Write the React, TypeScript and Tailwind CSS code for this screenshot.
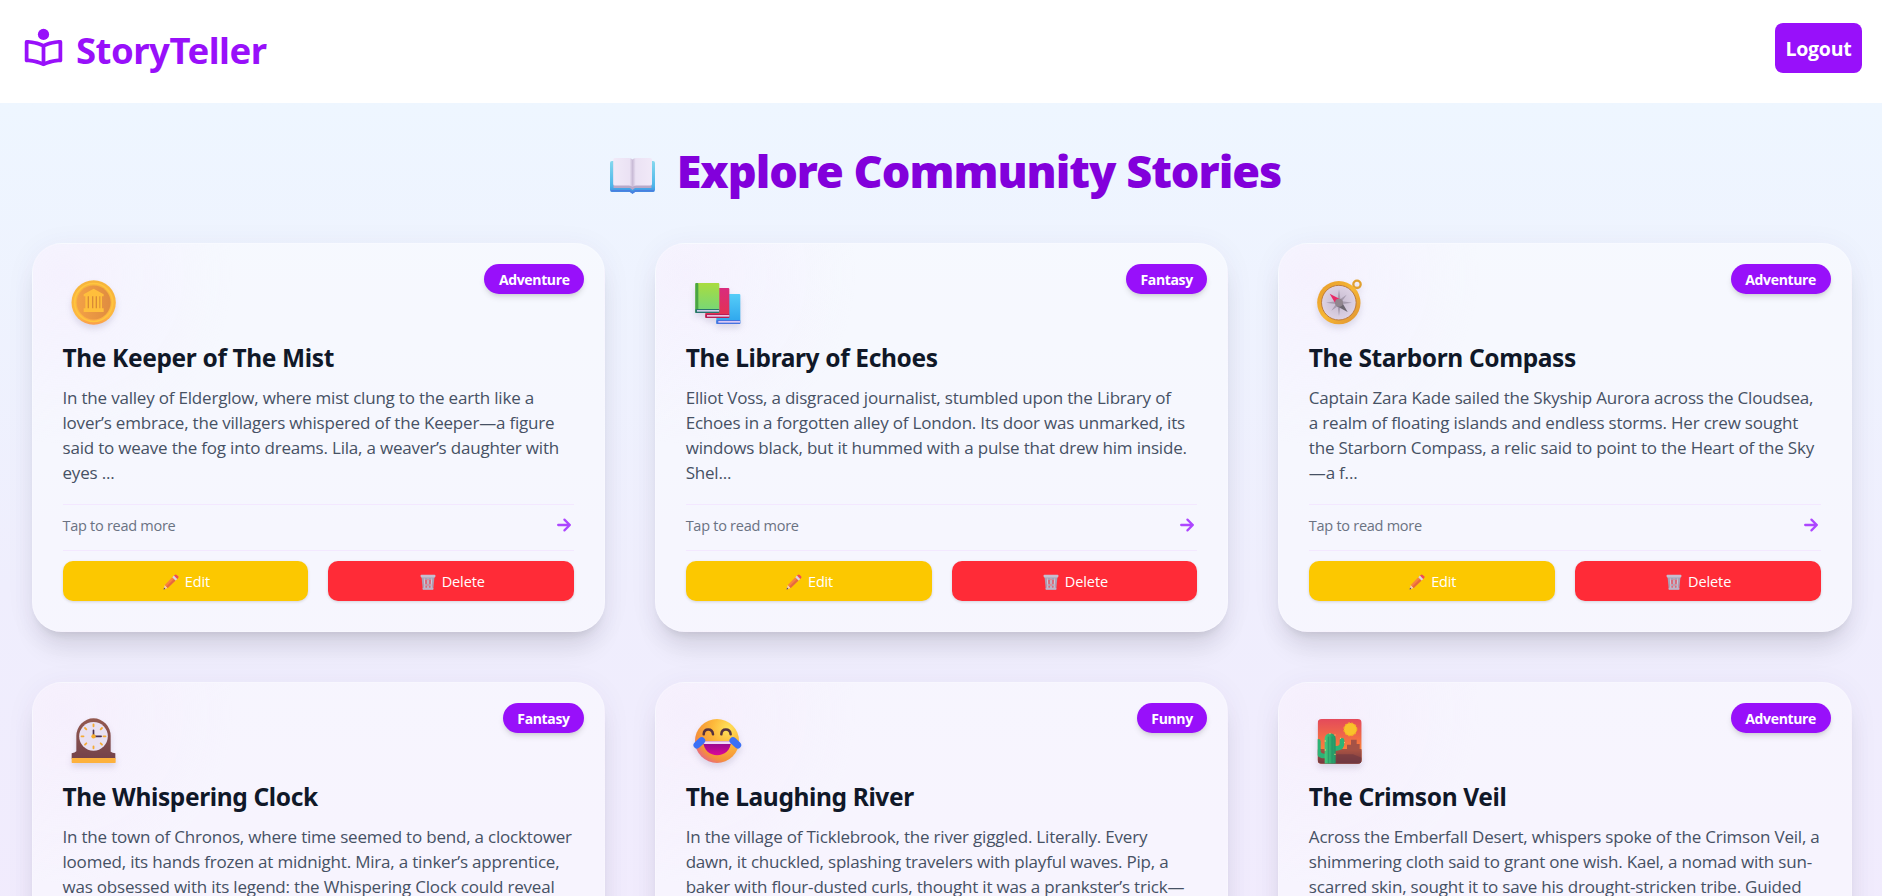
import type { ReactNode } from "react";

const SANS = "font-['Open_Sans','Noto_Sans',sans-serif]";
const BOLD_SANS = "font-['Noto_Sans','Open_Sans',sans-serif]";

function BookReaderIcon() {
  return (
    <svg viewBox="0 0 24 24" className="size-[45px] shrink-0" fill="currentColor">
      <path d="M21 8c-.202 0-4.85.029-9 2.008C7.85 8.029 3.202 8 3 8a1 1 0 0 0-1 1v9.883a1 1 0 0 0 .305.719c.195.188.48.305.729.28l.127-.001c.683 0 4.296.098 8.416 2.025.016.008.034.005.05.011.119.049.244.083.373.083s.254-.034.374-.083c.016-.006.034-.003.05-.011 4.12-1.928 7.733-2.025 8.416-2.025l.127.001c.238.025.533-.092.729-.28.194-.189.304-.449.304-.719V9a1 1 0 0 0-1-1zM4 10.049c1.485.111 4.381.48 7 1.692v7.742c-3-1.175-5.59-1.494-7-1.576v-7.858zm16 7.858c-1.41.082-4 .401-7 1.576v-7.742c2.619-1.212 5.515-1.581 7-1.692v7.858z" />
      <circle cx="12" cy="5" r="3" />
    </svg>
  );
}

function OpenBook() {
  return (
    <svg viewBox="0 0 45 36" className="mt-[6px] h-9 w-[45px] shrink-0">
      <defs>
        <linearGradient id="cover" x1="0" y1="0" x2="0" y2="1">
          <stop offset="0" stopColor="#85d8ee" />
          <stop offset=".75" stopColor="#4cb6ea" />
          <stop offset="1" stopColor="#3f83e0" />
        </linearGradient>
        <linearGradient id="page" x1="0" y1="0" x2="1" y2="0">
          <stop offset="0" stopColor="#f1eaf8" />
          <stop offset=".42" stopColor="#ebe2f4" />
          <stop offset=".5" stopColor="#c9bbd6" />
          <stop offset=".58" stopColor="#ebe2f4" />
          <stop offset="1" stopColor="#f1e9f8" />
        </linearGradient>
      </defs>
      <path d="M2 3h41a2 2 0 0 1 2 2v27a2 2 0 0 1-2 2H25l-2.500 2L20 34H2a2 2 0 0 1-2-2V5a2 2 0 0 1 2-2z" fill="url(#cover)" />
      <path d="M1 32h19l2.500 2L25 32h19v1.500H26L22.500 35.500 19 33.500H1z" fill="#4a7fe0" />
      <path d="M3.500 3.500h38V30H25l-2.500 2L20 30H3.500z" fill="#b8a8c8" />
      <path d="M5 0h14q2.500 0 3.500 1.500Q23.500 0 26 0h14q2 0 2 2v24q0 1.500-2 1.500H26q-2.500 0-3.500 1.500-1-1.500-3.500-1.500H5q-1.800 0-1.800-1.500V2Q3.200 0 5 0z" fill="url(#page)" />
    </svg>
  );
}

function Emoji({ viewBox, children }: { viewBox: string; children: ReactNode }) {
  return (
    <svg
      viewBox={viewBox}
      className="mt-[6px] ml-[8.5px] size-[45px] overflow-visible drop-shadow-[0_4px_3px_rgba(60,40,90,0.14)]"
    >
      {children}
    </svg>
  );
}

function Coin() {
  return (
    <Emoji viewBox="31 45 135 135">
      <defs>
        <linearGradient id="coinRim" x1="0" y1="0" x2="0" y2="1">
          <stop offset="0" stopColor="#f6b53c" />
          <stop offset=".8" stopColor="#fdb740" />
          <stop offset="1" stopColor="#fb9d4c" />
        </linearGradient>
        <linearGradient id="coinFace" x1="0" y1="0" x2="1" y2="0">
          <stop offset="0" stopColor="#f3a146" />
          <stop offset="1" stopColor="#df8c40" />
        </linearGradient>
      </defs>
      <circle cx="99" cy="112.500" r="66.500" fill="url(#coinRim)" />
      <circle cx="99" cy="112.500" r="57" fill="none" stroke="#ffc53f" strokeWidth="5" />
      <circle cx="99" cy="112.500" r="51" fill="url(#coinFace)" />
      <path d="M99 71l30 17v6h-5v36h5v11H69v-11h5V94h-5v-6z" fill="#ffbf3c" />
      <path d="M81 94h4v36h-4zM94 94h4v36h-4zM105 94h4v36h-4zM116 94h3v36h-3z" fill="#d98a36" />
    </Emoji>
  );
}

function Books() {
  return (
    <Emoji viewBox="41 60 135 135">
      <defs>
        <linearGradient id="bkG" x1="0" y1="0" x2="0" y2="1">
          <stop offset="0" stopColor="#a9dc3f" />
          <stop offset="1" stopColor="#72d77c" />
        </linearGradient>
        <linearGradient id="bkR" x1="0" y1="0" x2="0" y2="1">
          <stop offset="0" stopColor="#d92c7e" />
          <stop offset="1" stopColor="#e5324d" />
        </linearGradient>
        <linearGradient id="bkB" x1="0" y1="0" x2="0" y2="1">
          <stop offset="0" stopColor="#56cdf8" />
          <stop offset="1" stopColor="#2ba3ec" />
        </linearGradient>
      </defs>
      <rect x="108" y="102" width="72" height="90" rx="3" fill="url(#bkB)" />
      <rect x="108" y="180" width="72" height="12" rx="3" fill="#4774e0" />
      <rect x="114" y="183" width="66" height="5" fill="#dcc9f5" />
      <rect x="75" y="84" width="72" height="90" rx="3" fill="url(#bkR)" />
      <rect x="75" y="162" width="72" height="12" rx="3" fill="#b81f55" />
      <rect x="80" y="165" width="67" height="5" fill="#e8c4e4" />
      <rect x="45" y="69" width="72" height="90" rx="3" fill="url(#bkG)" />
      <rect x="45" y="69" width="9" height="90" rx="3" fill="#4aa443" />
      <rect x="45" y="147" width="72" height="12" rx="3" fill="#28766f" />
      <rect x="50" y="150" width="66" height="5" fill="#cfcfe9" />
    </Emoji>
  );
}

function Compass() {
  return (
    <Emoji viewBox="52 60 135 135">
      <defs>
        <linearGradient id="cmpRim" x1="0" y1="0" x2="1" y2="1">
          <stop offset="0" stopColor="#e59a2c" />
          <stop offset=".5" stopColor="#f7b733" />
          <stop offset="1" stopColor="#dd8f32" />
        </linearGradient>
        <radialGradient id="cmpFace">
          <stop offset="0" stopColor="#c6bacf" />
          <stop offset="1" stopColor="#ddd2e4" />
        </radialGradient>
      </defs>
      <circle cx="172" cy="73" r="11" fill="none" stroke="#e0a02f" strokeWidth="7" />
      <circle cx="117.500" cy="128" r="65" fill="url(#cmpRim)" />
      <circle cx="117.500" cy="128" r="52" fill="url(#cmpFace)" stroke="#bd7a3d" strokeWidth="3" />
      <path d="M118 88l5 35 34 5-34 5-5 35-5-35-34-5 34-5zM141 104l-14 20-6-6zM95 152l14-20 6 6z" fill="#a79caf" />
      <path d="M90 101l32 17-14 14z" fill="#e92866" />
      <path d="M144 156l-32-17 14-14z" fill="#6c6670" />
      <circle cx="118" cy="128" r="12" fill="#91868f" />
    </Emoji>
  );
}

function Clock() {
  return (
    <Emoji viewBox="31 57 135 135">
      <defs>
        <linearGradient id="clkWood" x1="0" y1="0" x2="0" y2="1">
          <stop offset="0" stopColor="#93594f" />
          <stop offset="1" stopColor="#74424a" />
        </linearGradient>
      </defs>
      <path d="M47 108a51.500 53 0 0 1 103 0v47q5 3 14 5v16H33v-16q10-2 14-6z" fill="url(#clkWood)" />
      <rect x="33" y="174" width="132" height="15" rx="2" fill="#fdb13c" />
      <circle cx="98.500" cy="109" r="43" fill="#e9e1f2" />
      <g stroke="#f5ab35" strokeWidth="5.500" strokeLinecap="round">
        <path d="M98.500 73v6M98.500 139v6M62.500 109h6M128.500 109h6M73 84l4 4M120 130l4 4M73 134l4-4M120 88l4-4" />
      </g>
      <path d="M98.500 109V91M98.500 109h23" stroke="#49304e" strokeWidth="5" strokeLinecap="round" />
      <circle cx="98.500" cy="109" r="6.500" fill="#f8ad2d" />
    </Emoji>
  );
}

function Laugh() {
  return (
    <Emoji viewBox="41 57 135 135">
      <defs>
        <radialGradient id="lghFace" cx=".75" cy=".22" r=".9">
          <stop offset="0" stopColor="#ffe45c" />
          <stop offset=".4" stopColor="#fdb83a" />
          <stop offset=".8" stopColor="#f49239" />
          <stop offset="1" stopColor="#e8638a" />
        </radialGradient>
        <linearGradient id="lghMouth" x1="0" y1="0" x2="0" y2="1">
          <stop offset="0" stopColor="#8b0a8e" />
          <stop offset="1" stopColor="#dd0797" />
        </linearGradient>
      </defs>
      <circle cx="110" cy="123" r="66" fill="url(#lghFace)" />
      <path d="M70 103c1-19 26-19 28 0M123 103c1-19 26-19 28 0" fill="none" stroke="#55323f" strokeWidth="7.500" strokeLinecap="round" />
      <path d="M69 124h83c0 56-83 56-83 0z" fill="url(#lghMouth)" />
      <path d="M69 124h83v5q0 3-3 3H73q-4 0-4-3z" fill="#efd9f8" />
      <path d="M50 135l14-13M172 135l-14-13" stroke="#3c70f5" strokeWidth="21" strokeLinecap="round" />
    </Emoji>
  );
}

function Desert() {
  return (
    <Emoji viewBox="52 57 135 135">
      <defs>
        <linearGradient id="dstSky" x1="0" y1="0" x2="0" y2="1">
          <stop offset="0" stopColor="#e44a5b" />
          <stop offset=".7" stopColor="#fb8238" />
        </linearGradient>
        <linearGradient id="dstSand" x1="0" y1="0" x2="0" y2="1">
          <stop offset="0" stopColor="#a75142" />
          <stop offset="1" stopColor="#743a42" />
        </linearGradient>
        <linearGradient id="dstCactus" x1="0" y1="0" x2="1" y2="0">
          <stop offset="0" stopColor="#45c97b" />
          <stop offset="1" stopColor="#219466" />
        </linearGradient>
        <clipPath id="dstClip">
          <rect x="54" y="57" width="132" height="134" rx="12" />
        </clipPath>
      </defs>
      <g clipPath="url(#dstClip)">
        <rect x="54" y="57" width="132" height="134" fill="url(#dstSky)" />
        <path d="M54 147h88v-13h12v-15h17v13h9v15h6v44H54z" fill="#a55246" />
        <path d="M54 151h132v40H54z" fill="url(#dstSand)" />
        <path d="M110 163h50l26 10v18h-76z" fill="#6c3741" opacity=".6" />
        <circle cx="152" cy="88" r="19" fill="#f9c22a" stroke="#f5ae26" strokeWidth="4" strokeDasharray="6 4" />
        <path d="M127 121v9q0 15-16 15h-8M56 124v28q0 16 20 16h10" fill="none" stroke="#2db376" strokeWidth="14" strokeLinecap="round" />
        <path d="M75 191v-75a16 16 0 0 1 33 0v75z" fill="url(#dstCactus)" />
        <path d="M86 110v80M97 110v80" stroke="#218d63" strokeWidth="2" />
        <path d="M75 123h4M104 105h4M75 150h4M104 163h4M91 99v4M121 115h3M133 128h3" stroke="#f6d070" strokeWidth="3" />
      </g>
    </Emoji>
  );
}

function Pencil() {
  return (
    <svg viewBox="0 0 16 16" className="size-4 shrink-0">
      <path d="M.5 15.500l1.300-4.600 2.900 3.100z" fill="#f5cdb4" />
      <path d="M.5 15.500l.6-1.900 1.300 1.300z" fill="#4b3854" />
      <path d="M1.800 10.900L9.300 3.300l3.200 3.300-7.800 7.400z" fill="#f9823f" />
      <path d="M3.300 12.500l7.600-7.600 1.600 1.700-7.800 7.400z" fill="#e6693e" />
      <path d="M9.300 3.300l1.700-1.700 3.300 3.300-1.800 1.700z" fill="#d9d2e6" />
      <path d="M11 1.600l.7-.7q1-.9 2 0l1.400 1.400q.9.900 0 1.800l-.8.800z" fill="#ee4a57" />
    </svg>
  );
}

function Trash() {
  return (
    <svg viewBox="0 0 16 16" className="size-4 shrink-0">
      <path d="M1.500 2.500h13l-1.300 13H2.800z" fill="#a9a0b5" />
      <path d="M4 5l2.700 3L4 11l2.700 3M8 5L5.300 8 8 11l-2.700 3M8 5l2.700 3L8 11l2.700 3M12 5L9.300 8l2.700 3-2.700 3" fill="none" stroke="#e85a6a" strokeWidth=".9" />
      <path d="M4.300 4.500l.6 9.500M8 4.500V14M11.700 4.500l-.6 9.500" stroke="#dad4e2" strokeWidth=".8" />
      <rect x=".6" y=".8" width="14.800" height="2.600" rx=".8" fill="#c6bfd0" />
      <rect x="2.600" y="13.800" width="10.800" height="1.900" rx=".6" fill="#bdb4c8" />
    </svg>
  );
}

type Story = { title: string; genre: string; icon: ReactNode; lines: string[] };

const stories: Story[] = [
  {
    title: "The Keeper of The Mist",
    genre: "Adventure",
    icon: <Coin />,
    lines: [
      "In the valley of Elderglow, where mist clung to the earth like a",
      "lover’s embrace, the villagers whispered of the Keeper—a figure",
      "said to weave the fog into dreams. Lila, a weaver’s daughter with",
      "eyes ...",
    ],
  },
  {
    title: "The Library of Echoes",
    genre: "Fantasy",
    icon: <Books />,
    lines: [
      "Elliot Voss, a disgraced journalist, stumbled upon the Library of",
      "Echoes in a forgotten alley of London. Its door was unmarked, its",
      "windows black, but it hummed with a pulse that drew him inside.",
      "Shel...",
    ],
  },
  {
    title: "The Starborn Compass",
    genre: "Adventure",
    icon: <Compass />,
    lines: [
      "Captain Zara Kade sailed the Skyship Aurora across the Cloudsea,",
      "a realm of floating islands and endless storms. Her crew sought",
      "the Starborn Compass, a relic said to point to the Heart of the Sky",
      "—a f...",
    ],
  },
  {
    title: "The Whispering Clock",
    genre: "Fantasy",
    icon: <Clock />,
    lines: [
      "In the town of Chronos, where time seemed to bend, a clocktower",
      "loomed, its hands frozen at midnight. Mira, a tinker’s apprentice,",
      "was obsessed with its legend: the Whispering Clock could reveal",
    ],
  },
  {
    title: "The Laughing River",
    genre: "Funny",
    icon: <Laugh />,
    lines: [
      "In the village of Ticklebrook, the river giggled. Literally. Every",
      "dawn, it chuckled, splashing travelers with playful waves. Pip, a",
      "baker with flour-dusted curls, thought it was a prankster’s trick—",
    ],
  },
  {
    title: "The Crimson Veil",
    genre: "Adventure",
    icon: <Desert />,
    lines: [
      "Across the Emberfall Desert, whispers spoke of the Crimson Veil, a",
      "shimmering cloth said to grant one wish. Kael, a nomad with sun-",
      "scarred skin, sought it to save his drought-stricken tribe. Guided",
    ],
  },
];

function StoryCard({ title, genre, icon, lines }: Story) {
  return (
    <article className="relative flex h-[389px] flex-col rounded-[30px] border border-white/20 bg-white/45 bg-[radial-gradient(circle_at_30px_30px,rgba(243,225,251,0.3),transparent_170px)] p-[30px] shadow-[0_4px_30px_rgba(70,50,120,0.06),0_21px_26px_-5px_rgba(0,0,0,0.09),0_8px_10px_-6px_rgba(0,0,0,0.1)]">
      <span className="absolute top-5 right-5 flex h-[30px] items-center rounded-full bg-[#9810fa] px-[14.5px] pt-px text-[14px] font-bold tracking-[-0.35px] text-white shadow-[0_4px_6px_-1px_rgba(0,0,0,0.12),0_2px_4px_-2px_rgba(0,0,0,0.12)]">
        {genre}
      </span>
      <div className="h-[68px]">{icon}</div>
      <h2 className={`${BOLD_SANS} text-[24.5px] leading-[31px] font-bold tracking-[-0.37px] whitespace-nowrap text-[#101828]`}>
        {title}
      </h2>
      <div className="mt-3 h-[100px] text-[17px] leading-[25px] tracking-[-0.2px] text-[#465164]">
        {lines.map((line) => (
          <p key={line} className="whitespace-nowrap">{line}</p>
        ))}
      </div>
      <div className="mt-[19px] flex h-[46px] items-center justify-between border-t border-[#f3e8ff] pb-1">
        <span className="text-[14.5px] tracking-[-0.27px] text-[#6a7282]">Tap to read more</span>
        <svg viewBox="0 0 24 24" className="mb-px size-[20px]" fill="none" stroke="#ad46ff" strokeWidth="2.700" strokeLinecap="round" strokeLinejoin="round">
          <path d="M5 12h14M12.500 5.500l6.500 6.500-6.500 6.500" />
        </svg>
      </div>
      <div className="flex gap-5 border-t border-[#f3e8ff] pt-[10px]">
        <button className="flex h-10 flex-1 items-center justify-center gap-[6px] rounded-[10px] bg-[#fcc800] pt-px pl-[2px] text-[14.5px] font-medium tracking-[-0.15px] text-white shadow-[0_1px_3px_rgba(0,0,0,0.14)]">
          <Pencil />
          Edit
        </button>
        <button className="flex h-10 flex-1 items-center justify-center gap-[6px] rounded-[10px] bg-[#ff2b37] pt-px pl-[2px] text-[14.5px] font-medium tracking-[-0.1px] text-white shadow-[0_1px_3px_rgba(0,0,0,0.14)]">
          <Trash />
          Delete
        </button>
      </div>
    </article>
  );
}

export default function App() {
  return (
    <div className={`${SANS} flex h-screen flex-col overflow-hidden bg-white`}>
      <header className="flex h-[103px] shrink-0 items-start justify-between bg-white pr-5 pl-[21px] text-[#9810fa]">
        <div className="mt-[25px] flex items-start gap-[10px]">
          <BookReaderIcon />
          <span className={`${BOLD_SANS} mt-px text-[36.500px] leading-[48px] font-bold tracking-[-0.5px]`}>StoryTeller</span>
        </div>
        <button className="mt-[23px] h-[50px] w-[87px] rounded-[8px] bg-[#9810fa] pt-[2px] text-[19.5px] font-bold tracking-[-0.25px] text-white">
          Logout
        </button>
      </header>
      <main className="flex-1 bg-linear-to-b from-[#eef6ff] via-[#efeefd] to-[#f2eafd] pr-[30.500px] pl-[31.500px]">
        <div className="flex h-[140px] items-center justify-center gap-[22px] pl-[8px]">
          <OpenBook />
          <h1 className={`${BOLD_SANS} pb-[5px] text-[45px] font-black tracking-[-1px] whitespace-nowrap text-[#8200db]`}>
            Explore Community Stories
          </h1>
        </div>
        <div className="grid grid-cols-3 gap-x-[49.500px] gap-y-[50px]">
          {stories.map((story) => (
            <StoryCard key={story.title} {...story} />
          ))}
        </div>
      </main>
    </div>
  );
}
